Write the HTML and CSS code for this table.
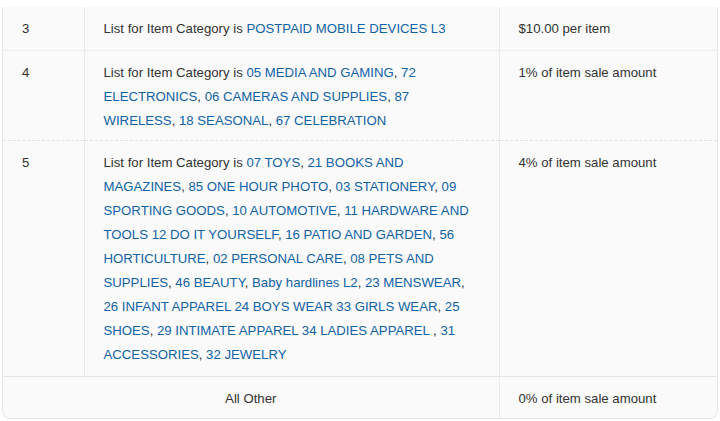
FILE: index.html
```html
<!DOCTYPE html>
<html>
<head>
<meta charset="utf-8">
<link rel="stylesheet" href="styles.css">
</head>
<body>
<div class="wrap">
<table class="tiers">
  <colgroup>
    <col class="c-num">
    <col class="c-rule">
    <col class="c-fee">
  </colgroup>
  <tbody>
    <tr class="r-dotted first">
      <td class="num">3</td>
      <td class="rule">List for Item Category is <a>POSTPAID MOBILE DEVICES L3</a></td>
      <td class="fee">$10.00 per item</td>
    </tr>
    <tr class="r-dashed">
      <td class="num">4</td>
      <td class="rule">List for Item Category is <a>05 MEDIA AND GAMING</a>, <a>72 ELECTRONICS</a>, <a>06 CAMERAS AND SUPPLIES</a>, <a>87 WIRELESS</a>, <a>18 SEASONAL</a>, <a>67 CELEBRATION</a></td>
      <td class="fee">1% of item sale amount</td>
    </tr>
    <tr class="r-solid">
      <td class="num">5</td>
      <td class="rule">List for Item Category is <a>07 TOYS</a>, <a>21 BOOKS AND MAGAZINES</a>, <a>85 ONE HOUR PHOTO</a>, <a>03 STATIONERY</a>, <a>09 SPORTING GOODS</a>, <a>10 AUTOMOTIVE</a>, <a>11 HARDWARE AND TOOLS 12 DO IT YOURSELF</a>, <a>16 PATIO AND GARDEN</a>, <a>56 HORTICULTURE</a>, <a>02 PERSONAL CARE</a>, <a>08 PETS AND SUPPLIES</a>, <a>46 BEAUTY</a>, <a>Baby hardlines L2</a>, <a>23 MENSWEAR</a>, <a>26 INFANT APPAREL 24 BOYS WEAR 33 GIRLS WEAR</a>, <a>25 SHOES</a>, <a>29 INTIMATE APPAREL 34 LADIES APPAREL </a>, <a>31 ACCESSORIES</a>, <a>32 JEWELRY</a></td>
      <td class="fee">4% of item sale amount</td>
    </tr>
    <tr class="last">
      <td class="other" colspan="2">All Other</td>
      <td class="fee">0% of item sale amount</td>
    </tr>
  </tbody>
</table>
</div>
</body>
</html>
```

FILE: styles.css
```css
html, body {
  margin: 0;
  padding: 0;
  background: #ffffff;
}

body {
  font-family: "Liberation Sans", Arial, sans-serif;
  font-size: 13.2px;
  color: #333333;
}

.wrap {
  margin: 7px 2px 0 2px;
  border: 1px solid #e6e6ea;
  border-top: none;
  border-radius: 0 0 8px 8px;
  background: #fafafa;
  overflow: hidden;
}

.tiers {
  width: 100%;
  border-collapse: collapse;
  table-layout: fixed;
}

.c-num { width: 81px; }
.c-rule { width: 415px; }

.tiers td {
  vertical-align: top;
  line-height: 24px;
  padding: 10px 19px 7px 19px;
  border-left: 1px solid #ebebee;
}

.tiers td:first-child {
  border-left: none;
}

.tiers tr.first td {
  padding-top: 10px;
  padding-bottom: 9px;
}

.rule a {
  color: #1262a6;
  text-decoration: none;
}

.r-dotted td { border-bottom: 1px dotted #e2e2e6; }
.r-dashed td { border-bottom: 1px dashed #e2e2e6; }
.r-solid td { border-bottom: 1px solid #e4e4ea; }

.r-solid td { padding-bottom: 9px; }

.tiers td.other {
  text-align: center;
}

.last td {
  padding-top: 10px;
  padding-bottom: 7px;
}
```
